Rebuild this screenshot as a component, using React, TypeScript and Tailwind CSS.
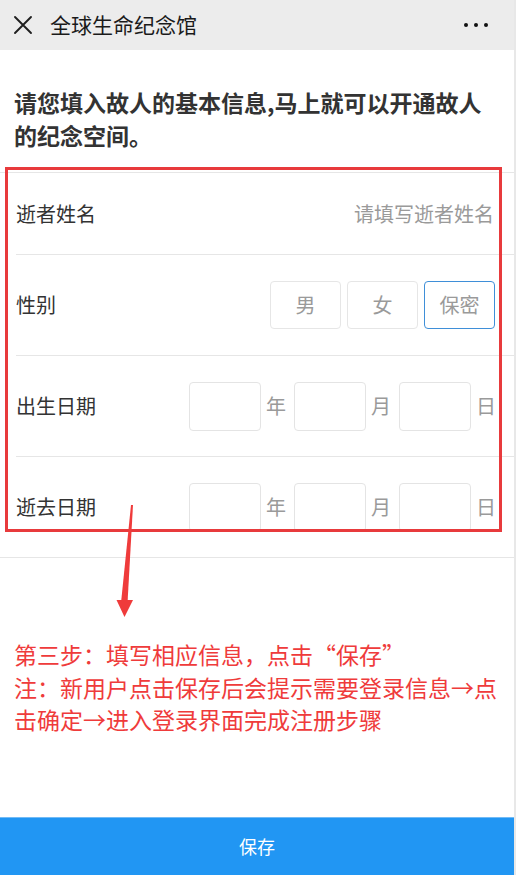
const FONT = { fontFamily: '"Noto Sans CJK SC", "Noto Sans", sans-serif' };

function CloseIcon() {
  return (
    <svg width="20" height="20" viewBox="0 0 20 20" className="shrink-0">
      <path d="M2 2 L18 18 M18 2 L2 18" stroke="#1f1f1f" strokeWidth="1.9" strokeLinecap="round" />
    </svg>
  );
}

function DateBox({ unit, last }: { unit: string; last?: boolean }) {
  return (
    <div className="flex items-center">
      <div className="w-[72px] h-[49px] border border-[#e4e4e4] rounded-[4px] bg-white" />
      <span className={`w-[20px] ml-[5px] text-[20px] text-[#9a9a9a] ${last ? "" : "mr-[8px]"}`}>{unit}</span>
    </div>
  );
}

function DateRow({ label }: { label: string }) {
  return (
    <div className="flex items-center justify-between h-[100px]">
      <span className="text-[20px] text-[#333]">{label}</span>
      <div className="flex items-center">
        <DateBox unit="年" />
        <DateBox unit="月" />
        <DateBox unit="日" last />
      </div>
    </div>
  );
}

export default function App() {
  return (
    <div className="relative w-[516px] h-[875px] flex flex-col bg-white border-r-2 border-[#e8e8e8] overflow-hidden" style={FONT}>
      {/* header */}
      <div className="h-[50px] bg-[#ececec] flex items-center pl-[13px] pr-[26px] shrink-0">
        <CloseIcon />
        <span className="ml-[17px] text-[21px] text-[#1a1a1a]">全球生命纪念馆</span>
        <div className="ml-auto flex items-center gap-[6px]">
          <span className="w-[4px] h-[4px] rounded-full bg-[#111]" />
          <span className="w-[4px] h-[4px] rounded-full bg-[#111]" />
          <span className="w-[4px] h-[4px] rounded-full bg-[#111]" />
        </div>
      </div>

      {/* intro */}
      <p className="pt-[36px] pl-[14px] w-[490px] text-[23px] leading-[33px] font-bold text-[#333]">
        请您填入故人的基本信息,马上就可以开通故人的纪念空间。
      </p>

      {/* form */}
      <div className="mt-[20px] border-t border-b border-[#e6e6e6]">
        <div className="ml-[16px] pr-[20px] border-b border-[#e6e6e6]">
          <div className="flex items-center justify-between h-[81px]">
            <span className="text-[20px] text-[#333]">逝者姓名</span>
            <span className="text-[20px] text-[#9a9a9a]">请填写逝者姓名</span>
          </div>
        </div>
        <div className="ml-[16px] pr-[19px] border-b border-[#e6e6e6]">
          <div className="flex items-center justify-between h-[100px]">
            <span className="text-[20px] text-[#333]">性别</span>
            <div className="flex gap-[6px]">
              <div className="w-[71px] h-[48px] border border-[#e6e6e6] rounded-[4px] flex items-center justify-center text-[20px] text-[#9a9a9a]">男</div>
              <div className="w-[71px] h-[48px] border border-[#e6e6e6] rounded-[4px] flex items-center justify-center text-[20px] text-[#9a9a9a]">女</div>
              <div className="w-[71px] h-[48px] border border-[#3f8fd8] rounded-[4px] flex items-center justify-center text-[20px] text-[#9a9a9a]">保密</div>
            </div>
          </div>
        </div>
        <div className="ml-[16px] pr-[18px] border-b border-[#e6e6e6]">
          <DateRow label="出生日期" />
        </div>
        <div className="ml-[16px] pr-[18px]">
          <DateRow label="逝去日期" />
        </div>
      </div>

      {/* annotation */}
      <div className="mt-[80px] pl-[14px] w-[505px] text-[23px] leading-[32.5px] text-[#ef3b3b]">
        <p>第三步：填写相应信息，点击“保存”</p>
        <p>注：新用户点击保存后会提示需要登录信息→点击确定→进入登录界面完成注册步骤</p>
      </div>

      {/* save */}
      <button className="mt-auto h-[58px] w-full shrink-0 bg-[#2196f3] border-t border-[#72bbf6] text-white text-[18px]">
        保存
      </button>

      {/* overlays: red frame + arrow */}
      <div className="absolute left-[5px] top-[167px] w-[497px] h-[365px] border-[3px] border-[#e83a3c] pointer-events-none" />
      <svg className="absolute left-0 top-0 pointer-events-none" width="516" height="875">
        <polygon points="131,505 133,505 127.5,603 121,603" fill="#ef3b3b" />
        <polygon points="116.5,600 133,600 124.5,617" fill="#ef3b3b" />
      </svg>
    </div>
  );
}
